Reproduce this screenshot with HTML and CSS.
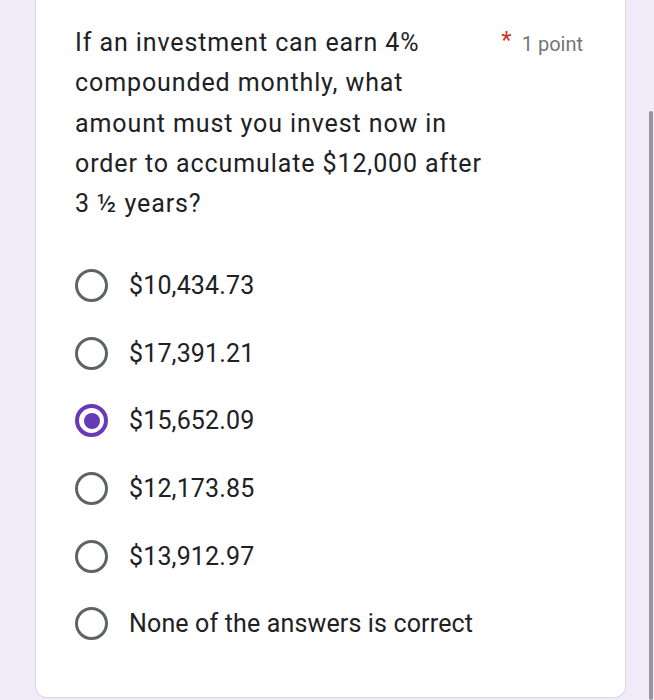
FILE: index.html
```html
<!DOCTYPE html>
<html lang="en">
<head>
    <meta charset="UTF-8">
    <meta name="viewport" content="width=device-width, initial-scale=1.0">
    <title>Quiz question</title>
    <link rel="stylesheet" href="styles.css">
</head>
<body>
    <div class="card">
        <!-- question + points -->
        <div class="qhead">
            <div class="qtext">If an investment can earn 4% compounded monthly, what amount must you invest now in order to accumulate $12,000 after 3 &frac12; years?</div>
            <div class="points"><span class="req">*</span>1 point</div>
        </div>
        <!-- choices -->
        <ul class="choices">
            <li><span class="radio"></span>$10,434.73</li>
            <li><span class="radio"></span>$17,391.21</li>
            <li><span class="radio checked"></span>$15,652.09</li>
            <li><span class="radio"></span>$12,173.85</li>
            <li><span class="radio"></span>$13,912.97</li>
            <li><span class="radio"></span>None of the answers is correct</li>
        </ul>
    </div>
    <div class="scrollbar"></div>
</body>
</html>
```

FILE: styles.css
```css
* {margin:0;padding:0;box-sizing:border-box;}
html, body {height:100%;}
body {background:#f0ebf8;font-family:Roboto, "Liberation Sans", sans-serif;color:#202124;overflow:hidden;position:relative;}

.card {margin-left:35px;width:591px;height:698px;background:#fff;
       border:1px solid #dcd8e2;border-top:none;border-radius:0 0 12px 12px;
       padding:23px 42px 0 39px;}

.qhead {display:flex;align-items:flex-start;}
.qtext {width:412px;font-size:25px;line-height:40.3px;letter-spacing:0.9px;}
.points {margin-left:auto;font-size:20px;line-height:40px;color:#70757a;white-space:nowrap;}
.req {color:#d93025;font-size:24px;position:relative;top:-3px;margin-right:10px;}

.choices {list-style:none;margin-top:27px;}
.choices li {display:flex;align-items:center;height:67.7px;font-size:25px;letter-spacing:0.15px;}
.radio {width:33px;height:33px;border:3.5px solid #5f6368;border-radius:50%;margin-right:21px;
        display:flex;align-items:center;justify-content:center;flex-shrink:0;}
.radio.checked {border:4px solid #673ab7;}
.radio.checked::after {content:"";width:16px;height:16px;border-radius:50%;background:#673ab7;}

.scrollbar {position:absolute;right:1px;top:111px;bottom:0;width:4px;background:#96959b;border-radius:2px;}
```
